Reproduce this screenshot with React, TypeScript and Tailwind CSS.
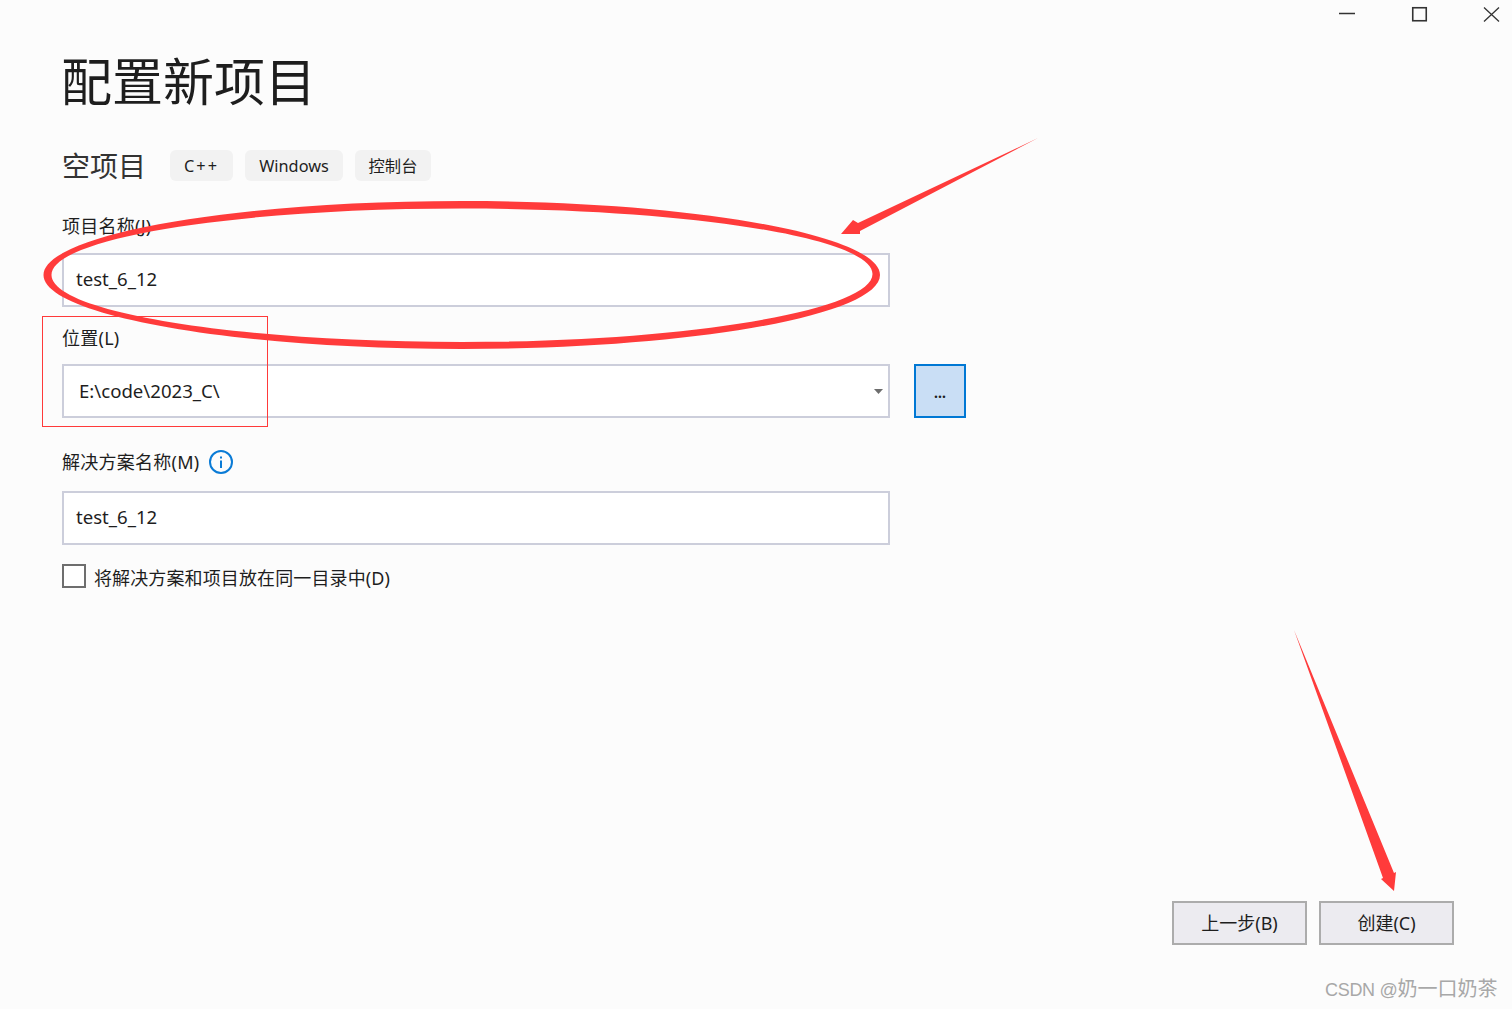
const font = { fontFamily: '"Noto Sans", "Noto Sans CJK SC", sans-serif' };

function Tag({ children, w, extra = "" }: { children: React.ReactNode; w: string; extra?: string }) {
  return (
    <span className={`flex h-[31px] items-center justify-center rounded-md bg-[#f2f2f2] pt-[2px] text-[16.3px] text-[#1e1e1e] ${w} ${extra}`}>
      {children}
    </span>
  );
}

function Field({ value, inset = "pl-3", children }: { value: string; inset?: string; children?: React.ReactNode }) {
  return (
    <div className={`flex h-[54px] w-[828px] items-center border-2 border-[#cccedb] bg-white text-[18.6px] leading-none text-[#1e1e1e] ${inset}`}>
      <span className="flex-1">{value}</span>
      {children}
    </div>
  );
}

function Label({ children }: { children: React.ReactNode }) {
  return <div className="flex h-6 items-center text-[18px] leading-6 tracking-[0.25px] text-[#1e1e1e]">{children}</div>;
}

function FooterButton({ children }: { children: React.ReactNode }) {
  return (
    <button className="flex h-11 w-[135px] items-center justify-center border-2 border-[#acacac] bg-[#ecebf0] text-[18px] text-[#1e1e1e]">
      {children}
    </button>
  );
}

export default function App() {
  return (
    <div className="relative flex h-[1009px] w-[1512px] flex-col overflow-hidden bg-[#fcfcfc]" style={font}>
      <div className="flex h-7 justify-end pr-[12px] pt-[6px]">
        <svg width="162" height="16" viewBox="0 0 162 16" fill="none" stroke="#333" className="block">
          <path d="M1 7.5H17" strokeWidth="1.5" />
          <rect x="74.75" y="1.75" width="13.5" height="13" strokeWidth="1.6" />
          <path d="M146 1.5L161 15.5M161 1.5L146 15.5" strokeWidth="1.3" />
        </svg>
      </div>

      <div className="flex flex-col pl-[62px]">
        <h1 className="-ml-[1px] mt-[24px] h-[60px] text-[51px] leading-[58px] text-[#1e1e1e]">配置新项目</h1>

        <div className="mt-[38px] flex h-[31px] items-center">
          <span className="w-[108px] pt-[2px] text-[28px] leading-[31px] text-[#333]">空项目</span>
          <div className="flex gap-3">
            <Tag w="w-[63px]" extra="tracking-[2px]">C++</Tag>
            <Tag w="w-[98px]">Windows</Tag>
            <Tag w="w-[76px]">控制台</Tag>
          </div>
        </div>

        <div className="mt-[33px]"><Label>项目名称(J)</Label></div>
        <div className="mt-[15px]"><Field value="test_6_12" inset="pb-[2px] pl-3" /></div>

        <div className="mt-[19px]"><Label>位置(L)</Label></div>
        <div className="mt-[14px] flex gap-6">
          <Field value="E:\code\2023_C\" inset="pl-[15px] pr-[5px]">
            <svg width="9" height="6" viewBox="0 0 9 6" className="mt-[1px]">
              <path d="M0 0H9L4.5 5Z" fill="#6d6d6d" />
            </svg>
          </Field>
          <button className="flex h-[54px] w-[52px] items-center justify-center border-2 border-[#0078d4] bg-[#c9def5] pt-1 text-[14px] font-bold leading-none text-[#1e1e1e]">
            ...
          </button>
        </div>

        <div className="mt-[32px] flex items-center gap-[10px]">
          <Label>解决方案名称(M)</Label>
          <svg width="24" height="24" viewBox="0 0 24 24" fill="none">
            <circle cx="12" cy="12" r="11" stroke="#0a7bd6" strokeWidth="2" />
            <rect x="11" y="10.5" width="2" height="7.5" fill="#0a7bd6" />
            <rect x="11" y="6.5" width="2" height="2" fill="#0a7bd6" />
          </svg>
        </div>
        <div className="mt-[17px]"><Field value="test_6_12" inset="pb-[2px] pl-3" /></div>

        <div className="mt-[19px] flex h-6 items-start gap-[8px]">
          <span className="h-6 w-6 border-2 border-[#6e6e6e] bg-white" />
          <span className="h-6 text-[18px] leading-[28px] tracking-[0.12px] text-[#1e1e1e]">将解决方案和项目放在同一目录中(D)</span>
        </div>
      </div>

      <div className="mt-auto flex justify-end gap-3 pb-[64px] pr-[58px]">
        <FooterButton>上一步(B)</FooterButton>
        <FooterButton>创建(C)</FooterButton>
      </div>

      <span className="absolute left-[1325px] top-[976px] text-[20px] leading-[27px] text-[#a8a8a8]" style={{ fontFamily: '"Liberation Sans", "Noto Sans CJK SC", sans-serif' }}>
        <span className="text-[18px] tracking-[-0.3px]">CSDN @</span>奶一口奶茶
      </span>

      <div className="absolute left-[42px] top-[316px] h-[111px] w-[226px] border border-[#ff3a3a]" />

      <svg className="pointer-events-none absolute left-0 top-0" width="1512" height="1009" viewBox="0 0 1512 1009" fill="#ff3b3b">
        <path
          fillRule="evenodd"
          d="M43.5 275C43.5 235 231 201 462 201C693 201 880 235 880 275C880 315 693 349 462 349C231 349 43.5 315 43.5 275ZM51.5 275C51.5 312 235 342 462 342C689 342 872.5 310 872.5 274C872.5 238 689 208.5 462 208.5C235 208.5 51.5 238 51.5 275Z"
        />
        <polygon points="1038,138 858,223 853,220 841,234 860,234 860,231" />
        <polygon points="1294,630 1394,873 1396,872 1394,891 1381,879 1383,878" />
      </svg>
    </div>
  );
}
